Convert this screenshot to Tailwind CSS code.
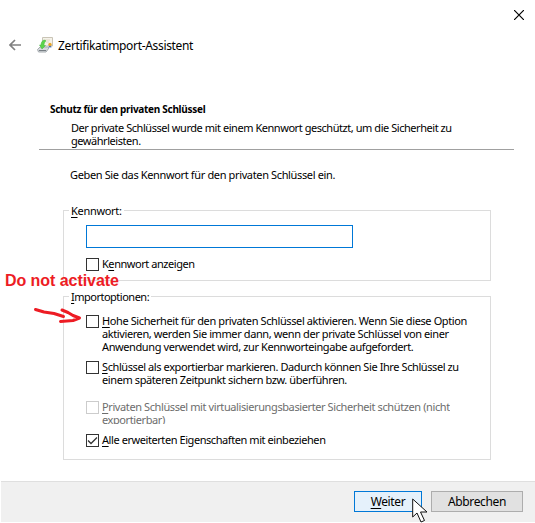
<!DOCTYPE html>
<html lang="de">
<head>
<meta charset="utf-8">
<title>Zertifikatimport-Assistent</title>
<script src="https://cdn.jsdelivr.net/npm/@tailwindcss/browser@4"></script>
</head>
<body class="bg-white">
<div class="relative flex h-[523px] w-[535px] flex-col overflow-hidden bg-white font-['Noto_Sans',sans-serif] text-[11px] leading-[13px] tracking-[-0.4px] text-black whitespace-nowrap">
  <div class="flex h-[30px] justify-end pt-[10px] pr-[11px]">
    <svg class="h-[10px] w-[10px]" viewBox="0 0 10 10" fill="none" stroke="#000" stroke-width="1.2"><path d="M0 0 10 10M10 0 0 10"/></svg>
  </div>
  <header class="flex h-[30px] items-center pl-[9px]">
    <svg class="h-[12px] w-[12px]" viewBox="0 0 12 12" fill="none" stroke="#808080" stroke-width="1.7"><path d="M12 6H1M6 1 1 6 6 11"/></svg>
    <svg class="ml-[16px] h-[16px] w-[16px]" viewBox="0 0 16 16">
      <path d="M5.500 .5H15.500V9H5.500Z" fill="#f5f2e9" stroke="#c9c4b6"/>
      <path d="M8 3H13M9 5H12" stroke="#e0d9c6"/>
      <path d="M.5 12.500 3 10H10.500L12 11 9 15H1.500Z" fill="#d5d9dc" stroke="#a5abaf"/>
      <path d="M2 13.500H9" stroke="#777e84"/>
      <path d="M8 3C5.500 3 4 5 4 8H2.500L5 12 8.500 8.500H7C7 6.500 7.500 5 9 4Z" fill="#5bd54b" stroke="#45b53f" stroke-width=".5"/>
      <path d="M11.800 8V11L13 10 14.200 11V8" fill="#456fb5"/>
      <circle cx="13" cy="7.500" r="1.700" fill="#e9a62a"/>
    </svg>
    <h1 class="mt-px ml-[5px] text-[12px] leading-[16px] font-normal tracking-[-0.33px]">Zertifikatimport-Assistent</h1>
  </header>
  <section class="h-[150px] pt-[43px] pl-[39px]">
    <h2 class="ml-[11px] text-[10px] leading-[13px] font-bold tracking-[-0.29px]">Schutz für den privaten Schlüssel</h2>
    <div class="mt-[5px] ml-[32px] tracking-[-0.45px]">
      <p>Der private Schlüssel wurde mit einem Kennwort geschützt, um die Sicherheit zu</p>
      <p>gewährleisten.</p>
    </div>
    <div class="mt-[2px] h-px w-[475px] bg-[#a0a0a0]"></div>
    <p class="mt-[18px] ml-[31px] tracking-[-0.36px]">Geben Sie das Kennwort für den privaten Schlüssel ein.</p>
  </section>
  <section class="ml-[63px] h-[71px] w-[428px] border border-[#dcdcdc] pl-[22px]">
    <p class="-mt-[7px] -ml-[17px] w-[55px] bg-white pl-[2px] tracking-[-0.3px]"><u class="underline-offset-2">K</u>ennwort:</p>
    <div class="mt-[8px] h-[23px] w-[267px] border border-[#0078d7]"></div>
    <label class="mt-[10px] flex gap-[3px]"><span class="h-[13px] w-[13px] shrink-0 border border-[#333]"></span><span class="-mt-px tracking-[-0.45px]">K<u class="underline-offset-2">e</u>nnwort anzeigen</span></label>
  </section>
  <section class="mt-[15px] ml-[63px] h-[164px] w-[428px] border border-[#dcdcdc] pl-[22px]">
    <p class="-mt-[7px] -ml-[17px] w-[82px] bg-white pl-[2px] tracking-[-0.5px]"><u class="underline-offset-2">I</u>mportoptionen:</p>
    <div class="mt-[12px] flex h-[46px] gap-[3px]"><span class="h-[13px] w-[13px] shrink-0 border border-[#333]"></span>
      <div class="-mt-px"><p class="tracking-[-0.39px]"><u class="underline-offset-2">H</u>ohe Sicherheit für den privaten Schlüssel aktivieren. Wenn Sie diese Option</p><p>aktivieren, werden Sie immer dann, wenn der private Schlüssel von einer</p><p>Anwendung verwendet wird, zur Kennworteingabe aufgefordert.</p></div>
    </div>
    <div class="flex h-[40px] gap-[3px]"><span class="h-[13px] w-[13px] shrink-0 border border-[#333]"></span>
      <div class="-mt-px"><p class="tracking-[-0.41px]"><u class="underline-offset-2">S</u>chlüssel als exportierbar markieren. Dadurch können Sie Ihre Schlüssel zu</p><p>einem späteren Zeitpunkt sichern bzw. überführen.</p></div>
    </div>
    <div class="flex h-[33px] gap-[3px] text-[#6d6d6d]"><span class="h-[13px] w-[13px] shrink-0 border border-[#ccc]"></span>
      <div class="-mt-px h-[24px] overflow-hidden"><p><u class="underline-offset-2">P</u>rivaten Schlüssel mit virtualisierungsbasierter Sicherheit schützen (nicht</p><p>exportierbar)</p></div>
    </div>
    <div class="flex gap-[3px]"><span class="h-[13px] w-[13px] shrink-0 border border-[#333]"><svg class="h-[11px] w-[11px]" viewBox="0 0 11 11" fill="none" stroke="#333" stroke-width="1.3"><path d="M1 5.500 4 8.500 10 2.500"/></svg></span>
      <p class="-mt-px tracking-[-0.43px]"><u class="underline-offset-2">A</u>lle erweiterten Eigenschaften mit einbeziehen</p>
    </div>
  </section>
  <footer class="mt-[21px] ml-px flex h-[41px] justify-end gap-[9px] border-t border-[#dfdfdf] bg-[#f0f0f0] pt-[9px] pr-[12px] text-[12px] leading-[19px] tracking-[-0.35px]">
    <button class="h-[21px] w-[68px] border border-[#0078d7] bg-[#e5f1fb]"><u class="underline-offset-2">W</u>eiter</button>
    <button class="h-[21px] w-[92px] border border-[#adadad] bg-[#e1e1e1]">Abbrechen</button>
  </footer>
  <p class="absolute top-[272px] left-[5px] font-['Liberation_Sans',sans-serif] text-[16px] leading-[18px] font-bold tracking-[-0.05px] text-[#ed1c24]">Do not activate</p>
  <svg class="absolute top-[304px] left-[30px] h-[22px] w-[54px]" viewBox="0 0 54 22" fill="none" stroke="#ed1c24" stroke-width="3" stroke-linecap="round" stroke-linejoin="round"><path d="M5.500 5.500 14 8 24 9.500 33.500 12.500M32 6 38 8.500 43 11.500 49.500 14 43 16.500 30.500 17.500"/></svg>
  <svg class="absolute top-[498px] left-[412px] h-[25px] w-[17px]" viewBox="0 0 17 25"><path d="M.7 1V19L5 15 9 24 12.500 22.500 8.500 14H15Z" fill="#fff" stroke="#111" stroke-width="1"/></svg>
</div>
</body>
</html>
